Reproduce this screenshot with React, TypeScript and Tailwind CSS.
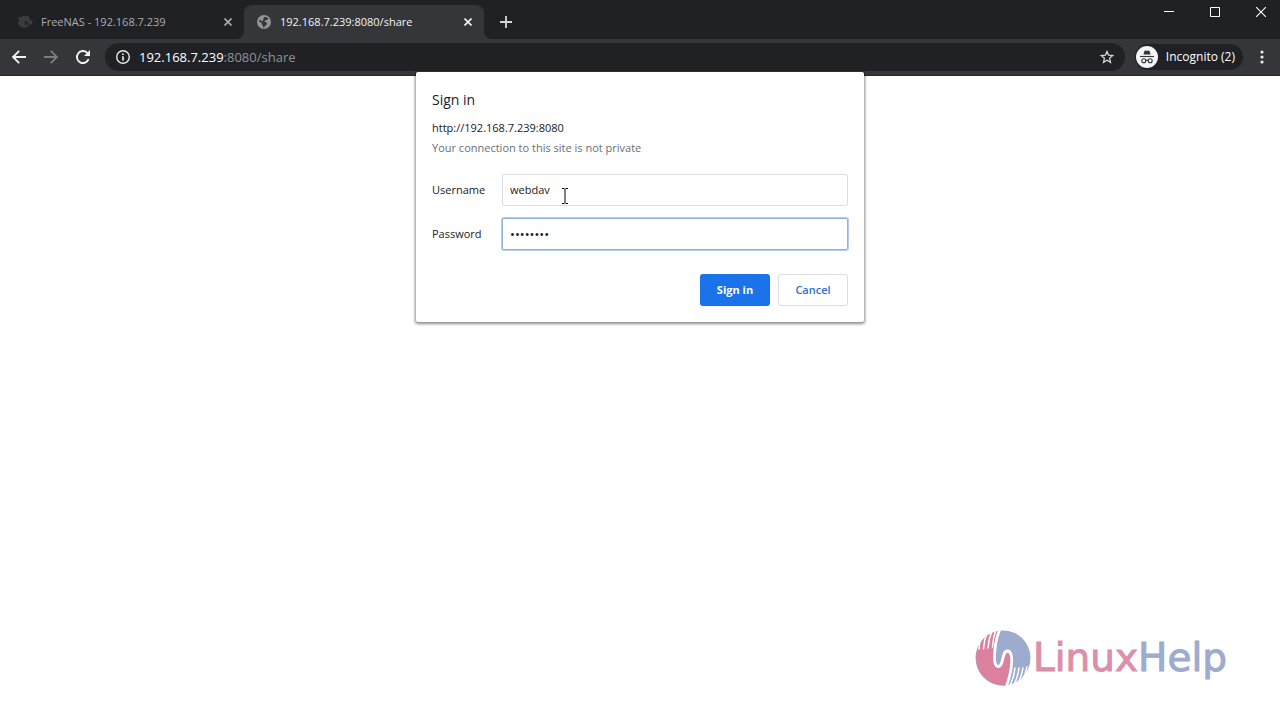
import { useState } from "react"
import type { ReactNode } from "react"

const tabs = [
    { title: "FreeNAS - 192.168.7.239", icon: <FreeNasIcon />, active: false },
    { title: "192.168.7.239:8080/share", icon: <GlobeIcon />, active: true }
]

function FreeNasIcon() {
    return (
        <svg viewBox="0 0 16 16" className="h-4 w-4 shrink-0 fill-[#3b3c40]" aria-hidden="true">
            <path d="M1 2.5 3.5 3.6C5 2.2 7.2 1.8 9 2.3L11.6 1.4 11.8 3.6C13 4.8 13.4 6 13.2 7L15.8 6 15 8.6 15.4 10.4 12.8 10.2C11.6 12.8 9 14.2 6.6 13.8 3.6 13.4 1.2 11.2 1.2 8.2L2.2 6.8Z" />
            <path d="m7 8.5 3-1-1.5 3L12 9.5" fill="none" stroke="#202124" strokeWidth="1.2" />
        </svg>
    )
}

function GlobeIcon() {
    return (
        <svg viewBox="0 0 16 16" className="h-4 w-4 shrink-0" aria-hidden="true">
            <circle cx="8" cy="8" r="7" fill="#919396" />
            <path d="M8.4 3C10 2.8 11.4 3.400 12.400 4.600L11 6H9.200V7.400L7.400 8H9.800L11 9.200 10.600 11 9.200 11.600 8.400 13.200 7 13.400V11.600L5.800 10.400V9L3 7.400C3.200 6.600 3.400 6 3.800 5.400L6 7.400 7.400 6V4.400Z" fill="#35363a" />
        </svg>
    )
}

function CloseIcon() {
    return (
        <svg viewBox="0 0 8 8" className="h-2 w-2" fill="none" stroke="currentColor" strokeWidth="1.6" aria-hidden="true">
            <path d="m0.5 0.5 7 7M7.5 0.5l-7 7" />
        </svg>
    )
}

function TabFlare({ side }: { side: "left" | "right" }) {
    return (
        <svg viewBox="0 0 8 8" className="h-2 w-2 shrink-0 fill-[#35363a]" aria-hidden="true">
            <path d={side === "left" ? "M8 0V8H0A8 8 0 0 0 8 0Z" : "M0 0V8H8A8 8 0 0 1 0 0Z"} />
        </svg>
    )
}

function IconButton({ label, className, children }: { label: string; className: string; children: ReactNode }) {
    return (
        <button type="button" aria-label={label} className={`flex shrink-0 items-center justify-center ${className}`}>
            {children}
        </button>
    )
}

function TabStrip() {
    return (
        <div className="flex h-[39px] items-end bg-[#202124]">
            {tabs.map(tab => (
                <div key={tab.title} className="flex items-end">
                    {tab.active && <TabFlare side="left" />}
                    <div
                        className={
                            tab.active
                                ? "flex h-[34px] w-60 items-center rounded-t-lg bg-[#35363a] pr-2 pl-3 text-[#f1f3f4]"
                                : "flex h-[34px] w-[236px] items-center pl-[17px] text-[#a9acb0]"
                        }
                    >
                        {tab.icon}
                        <span className="ml-2 flex-1 truncate text-[11px] leading-4">{tab.title}</span>
                        <IconButton label={`Close ${tab.title}`} className="h-4 w-4">
                            <CloseIcon />
                        </IconButton>
                    </div>
                    {tab.active && <TabFlare side="right" />}
                </div>
            ))}
            <IconButton label="New tab" className="h-[34px] w-7 text-[#d5d7da]">
                <svg viewBox="0 0 12 12" className="h-3 w-3" stroke="currentColor" strokeWidth="1.8" aria-hidden="true">
                    <path d="M6 0v12M0 6h12" />
                </svg>
            </IconButton>
            <div className="ml-auto flex gap-2 self-start text-white">
                <IconButton label="Minimize" className="h-6 w-[38px]">
                    <svg viewBox="0 0 10 10" className="h-[10px] w-[10px]" stroke="currentColor" aria-hidden="true">
                        <path d="M0 4.5h10" />
                    </svg>
                </IconButton>
                <IconButton label="Maximize" className="h-6 w-[38px]">
                    <svg viewBox="0 0 10 10" className="h-[10px] w-[10px]" fill="none" stroke="currentColor" aria-hidden="true">
                        <path d="M.5.5h9v9h-9z" />
                    </svg>
                </IconButton>
                <IconButton label="Close window" className="h-6 w-[38px]">
                    <svg viewBox="0 0 10 10" className="h-[10px] w-[10px]" stroke="currentColor" strokeWidth="1.1" aria-hidden="true">
                        <path d="m0 0 10 10M10 0 0 10" />
                    </svg>
                </IconButton>
            </div>
        </div>
    )
}

function Toolbar() {
    return (
        <div className="flex h-[37px] items-center border-b border-[#28292c] bg-[#35363a] pl-[3px]">
            <IconButton label="Back" className="h-7 w-8 text-[#f1f3f4]">
                <svg viewBox="0 0 16 16" className="h-4 w-4" fill="none" stroke="currentColor" strokeWidth="1.8" aria-hidden="true">
                    <path d="M15 8H2.2M8.2 1.8 2 8l6.2 6.2" />
                </svg>
            </IconButton>
            <IconButton label="Forward" className="h-7 w-8 text-[#7b7c7f]">
                <svg viewBox="0 0 16 16" className="h-4 w-4" fill="none" stroke="currentColor" strokeWidth="1.8" aria-hidden="true">
                    <path d="M1 8h12.8M7.8 1.8 14 8l-6.2 6.2" />
                </svg>
            </IconButton>
            <IconButton label="Reload" className="h-7 w-8 text-[#f1f3f4]">
                <svg viewBox="0 0 16 16" className="h-4 w-4" aria-hidden="true">
                    <path d="M13.6 10A6 6 0 1 1 12.2 3.8L13.5 5" fill="none" stroke="currentColor" strokeWidth="1.9" />
                    <path d="M15 1v6H9z" fill="currentColor" />
                </svg>
            </IconButton>
            <div className="ml-[6px] flex h-7 flex-1 items-center rounded-full bg-[#202124] px-[10px]">
                <svg viewBox="0 0 16 16" className="h-4 w-4 shrink-0" fill="none" stroke="#e8eaed" strokeWidth="1.4" aria-hidden="true">
                    <circle cx="8" cy="8" r="6.3" />
                    <path d="M8 7.2v4.2M8 4.4V6" strokeWidth="1.7" />
                </svg>
                <div className="ml-2 flex-1 truncate text-[13px] leading-5 text-[#8d9196]">
                    <span className="text-white">192.168.7.239</span>:8080/share
                </div>
                <IconButton label="Bookmark this page" className="h-4 w-4 text-[#d5d7da]">
                    <svg viewBox="0 0 16 16" className="h-4 w-4" fill="none" stroke="currentColor" strokeWidth="1.3" aria-hidden="true">
                        <path d="m8 2.4 1.6 3.8 4.1.4-3.1 2.7.9 4L8 11.2l-3.5 2.1.9-4-3.1-2.7 4.1-.4z" />
                    </svg>
                </IconButton>
            </div>
            <button
                type="button"
                className="ml-[10px] flex h-[26px] items-center rounded-full bg-[#202124] pr-2 pl-px text-[12px] leading-4 text-white"
            >
                <svg viewBox="0 0 22 22" className="mr-2 h-[22px] w-[22px]" aria-hidden="true">
                    <circle cx="11" cy="11" r="11" fill="#f1f3f4" />
                    <path d="M7.4 8.6 8.4 5.2Q8.7 4.4 9.6 4.6L11 5l1.4-.4q.9-.2 1.2.6l1 3.4z" fill="#35363a" />
                    <path d="M4 10.5h14" stroke="#35363a" strokeWidth="1.1" />
                    <g fill="none" stroke="#35363a" strokeWidth="1.1">
                        <circle cx="7.8" cy="14.8" r="2" />
                        <circle cx="14.2" cy="14.8" r="2" />
                        <path d="M9.8 14.5q1.2-.7 2.4 0" />
                    </g>
                </svg>
                Incognito (2)
            </button>
            <IconButton label="Menu" className="h-7 w-[37px] text-[#e8eaed]">
                <svg viewBox="0 0 4 14" className="h-[14px] w-1" fill="currentColor" aria-hidden="true">
                    <circle cx="2" cy="2" r="1.6" />
                    <circle cx="2" cy="7" r="1.6" />
                    <circle cx="2" cy="12" r="1.6" />
                </svg>
            </IconButton>
        </div>
    )
}

function SignInDialog() {
    const [username, setUsername] = useState("webdav")
    const [password, setPassword] = useState("password")

    return (
        <form
            role="dialog"
            aria-labelledby="signin-title"
            onSubmit={e => e.preventDefault()}
            className="absolute top-[72px] left-1/2 w-[448px] -translate-x-1/2 rounded-xs bg-white p-4 text-[11px] leading-4 text-[#202124] shadow-[0_1px_3px_1px_rgba(0,0,0,0.45)]"
        >
            <h1 id="signin-title" className="pt-[2px] text-[14px] leading-5">Sign in</h1>
            <p className="mt-[10px]">http://192.168.7.239:8080</p>
            <p className="mt-1 text-[#6b6e73]">Your connection to this site is not private</p>

            <div className="mt-[18px] grid grid-cols-[70px_1fr] items-center gap-y-3">
                <label htmlFor="username">Username</label>
                <input
                    id="username"
                    type="text"
                    value={username}
                    onChange={e => setUsername(e.target.value)}
                    className="h-8 rounded-xs border border-[#dadce0] px-[7px] pb-[2px] outline-none"
                />
                <label htmlFor="password">Password</label>
                <input
                    id="password"
                    type="password"
                    value={password}
                    onChange={e => setPassword(e.target.value)}
                    className="h-8 rounded-xs border border-[#8fb2dc] px-[7px] text-[13px] ring-1 ring-[#b4cdea] outline-none"
                />
            </div>

            <div className="mt-6 flex justify-end gap-2">
                <button type="submit" className="h-8 w-[70px] rounded-[3px] bg-[#1a73e8] font-bold text-white">
                    Sign in
                </button>
                <button type="button" className="h-8 w-[70px] rounded-[3px] border border-[#dadce0] font-semibold text-[#2f6fd0]">
                    Cancel
                </button>
            </div>
        </form>
    )
}

function TextCursor() {
    return (
        <svg viewBox="0 0 8 16" className="absolute top-[188px] left-1/2 ml-[-79px] h-4 w-2" fill="none" stroke="black" aria-hidden="true">
            <path d="M1 .5h2.5M4.5 .5H7M4 1v14M1 15.5h2.5M4.5 15.5H7" />
        </svg>
    )
}

function LinuxHelpLogo() {
    return (
        <div className="flex items-center">
            <svg viewBox="0 0 56 56" className="h-14 w-14" aria-hidden="true">
                <circle cx="28" cy="28" r="27.5" fill="#9dabce" />
                <path d="M24 .8A27.5 27.5 0 0 0 32 55.2C35 46 37 38 36.5 30 36 20 30 18 27.5 25 26.500 29 26.500 35 23 35.500 19.500 36 19.500 29 20 22 20.500 14 22 7 24 .8Z" fill="#db819f" />
                <path d="M24.500 0C20.500 10 19.500 19 19.500 28 19.500 38 25 39 27 32 28.500 26 29 21 32.500 21 36.500 21 37 28 36.500 34 36 43 34 49 31.500 56" fill="none" stroke="white" strokeWidth="2.8" />
                <g fill="none" stroke="white" strokeWidth="1.5" strokeLinecap="round">
                    <path d="M7 6Q4 12 4 19M12 3Q9 10 8.500 19M17 1Q13.500 9 13 18M21-1Q18 8 17.500 17" />
                    <path d="M40 38Q39 48 34.500 57M44 38Q43 47 38.500 56M48 38Q47 46 42.500 54M52 37Q51 44 46.500 51" />
                </g>
            </svg>
            <span className="ml-[2px] font-['DejaVu_Sans',sans-serif] text-[39px] leading-[56px] text-[#dc8fab] [-webkit-text-stroke:1px_currentColor]">
                Linux<span className="text-[#9dabce]">Help</span>
            </span>
        </div>
    )
}

export default function App() {
    return (
        <div className="relative flex min-h-screen flex-col bg-white font-['Open_Sans',sans-serif]">
            <TabStrip />
            <Toolbar />
            <main className="flex flex-1 items-end justify-end pr-[53px] pb-[34px]">
                <LinuxHelpLogo />
            </main>
            <SignInDialog />
            <TextCursor />
        </div>
    )
}
